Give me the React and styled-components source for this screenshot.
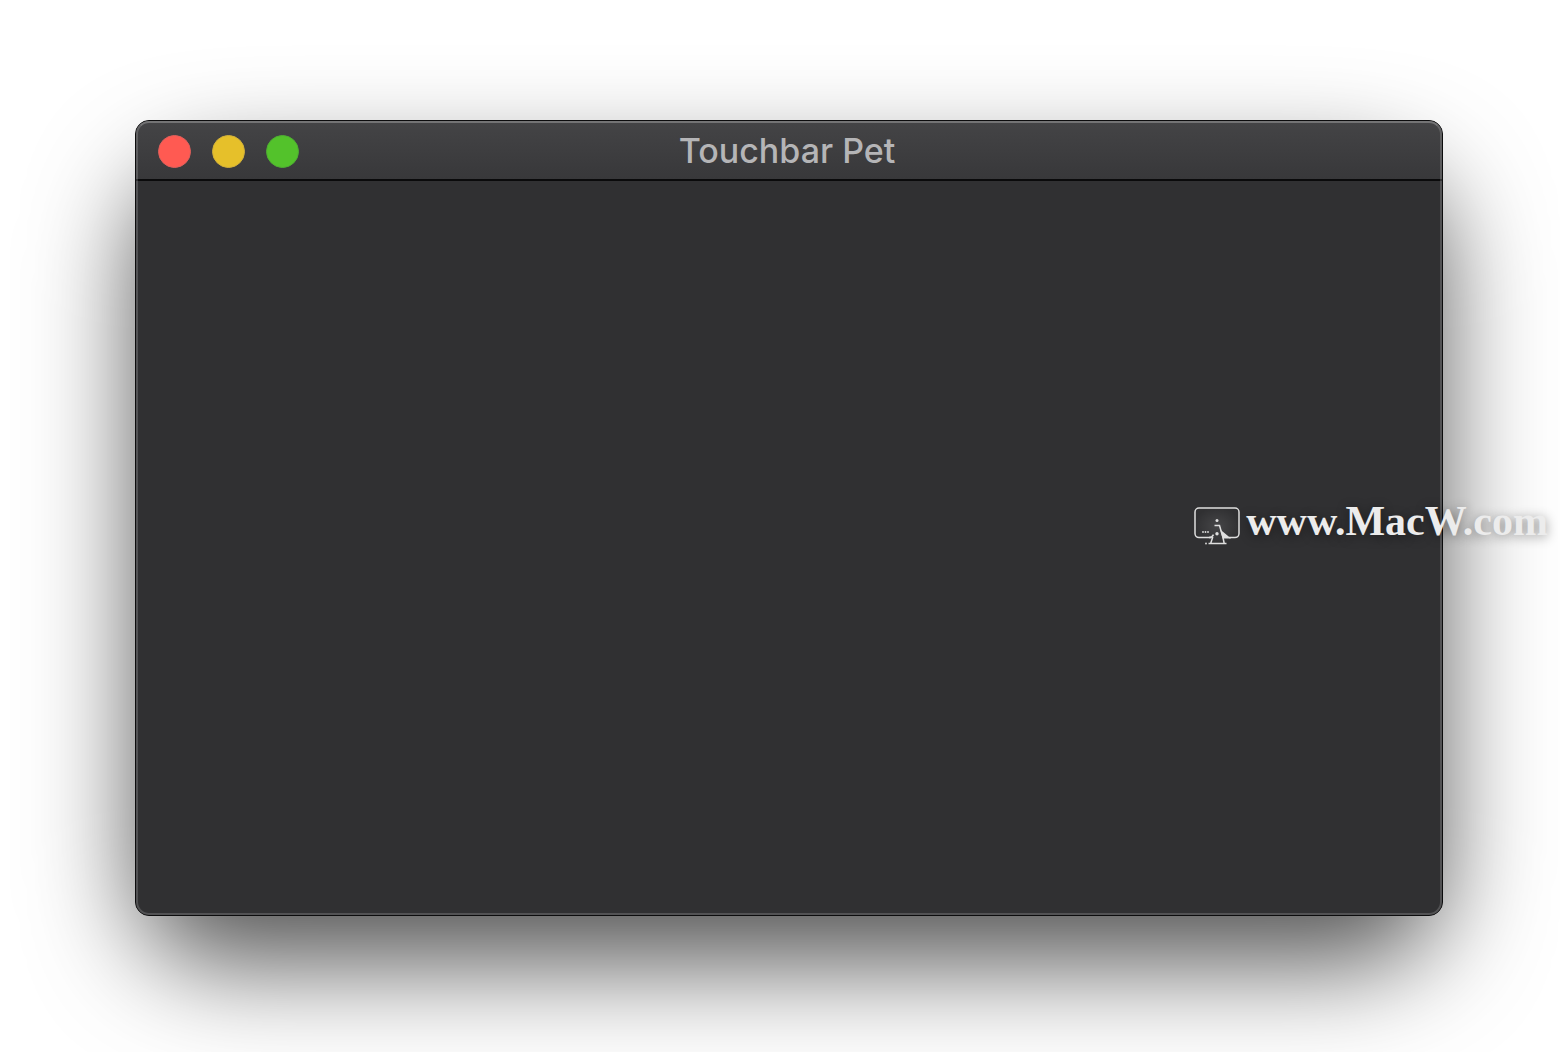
import React from "react";
import styled, { createGlobalStyle } from "styled-components";

const GlobalStyle = createGlobalStyle`
  * { box-sizing: border-box; }
  body { margin: 0; background: #fff; }
`;

const Desktop = styled.div`
  position: relative;
  display: flex;
  min-height: 100vh;
  padding: 120px 117px 136px 135px;
  overflow: hidden;
  isolation: isolate;
`;

const Window = styled.main`
  position: relative;
  display: flex;
  flex: 1;
  flex-direction: column;
  border: 1px solid #0c0c0d;
  border-radius: 14px;
  background: #303032;

  &::before {
    content: "";
    position: absolute;
    inset: 0;
    z-index: -1;
    border-radius: 80px;
    box-shadow: 0 50px 106px -2px rgba(0, 0, 0, 0.68);
  }

  &::after {
    content: "";
    position: absolute;
    inset: 0;
    border: 2px solid rgba(255, 255, 255, 0.17);
    border-top-color: rgba(255, 255, 255, 0.26);
    border-radius: 13px;
    pointer-events: none;
  }
`;

const TitleBar = styled.header`
  display: grid;
  grid-template-columns: 1fr auto 1fr;
  align-items: center;
  height: 60px;
  padding: 2px 26px 0 22px;
  border-bottom: 2px solid #0a0a0b;
  border-radius: 13px 13px 0 0;
  background: linear-gradient(#444446, #38383a);
`;

const Controls = styled.div`
  display: flex;
  gap: 21px;
`;

const WindowButton = styled.button`
  width: 33px;
  height: 33px;
  padding: 0;
  border: 1px solid ${(p) => p.$edge};
  border-radius: 50%;
  background: ${(p) => p.$fill};
`;

const Title = styled.h1`
  margin: 0;
  color: #b5b5b7;
  font: 500 34px/40px Inter, "Liberation Sans", sans-serif;
`;

const Content = styled.section`
  flex: 1;
`;

const SiteLink = styled.a`
  position: absolute;
  top: 50%;
  right: 12px;
  display: flex;
  align-items: flex-start;
  gap: 6px;
  transform: translateY(-50%);
  color: #ececec;
  font: 700 42px/28px "Liberation Serif", serif;
  text-decoration: none;
  text-shadow: 0 2px 12px rgba(0, 0, 0, 0.45);
`;

const Logo = styled.svg`
  width: 46px;
  height: 38px;
  background: radial-gradient(rgba(255, 255, 255, 0.1), transparent 70%);
`;

function MonitorLogo() {
  return (
    <Logo viewBox="0 0 46 38" fill="none" stroke="#dedede" strokeWidth="1.5" aria-hidden="true">
      <path d="M17.5 30.6H5a4 4 0 0 1-4-4V5a4 4 0 0 1 4-4h36a4 4 0 0 1 4 4v21.600a4 4 0 0 1-4 4h-6" />
      <path d="M15 30.600c2 0 3.500-1 4.500-3M18.800 30l-2 6M20.500 18.500h5l3.500 12 1.200 6M14.500 36.600h18" />
      <path d="M27.500 24.500l7.500 6.200h-5.800z" fill="#dedede" />
      <g fill="#dedede" stroke="none">
        <circle cx="23" cy="13.500" r="1.500" />
        <circle cx="23" cy="26.700" r="1.700" />
        <circle cx="9" cy="25" r="0.900" />
        <circle cx="11.500" cy="25" r="0.900" />
        <circle cx="14" cy="25" r="0.900" />
        <circle cx="12" cy="36.500" r="0.900" />
      </g>
    </Logo>
  );
}

const controls = [
  { label: "Close", fill: "#ff5a52", edge: "#e0605c" },
  { label: "Minimize", fill: "#e6c02a", edge: "#d3b13a" },
  { label: "Zoom", fill: "#53c22b", edge: "#4fae33" },
];

export default function App() {
  return (
    <>
      <GlobalStyle />
      <Desktop>
        <Window>
          <TitleBar>
            <Controls>
              {controls.map((c) => (
                <WindowButton key={c.label} type="button" aria-label={c.label} $fill={c.fill} $edge={c.edge} />
              ))}
            </Controls>
            <Title>Touchbar Pet</Title>
          </TitleBar>
          <Content />
        </Window>
        <SiteLink href="#">
          <MonitorLogo />
          www.MacW.com
        </SiteLink>
      </Desktop>
    </>
  );
}
